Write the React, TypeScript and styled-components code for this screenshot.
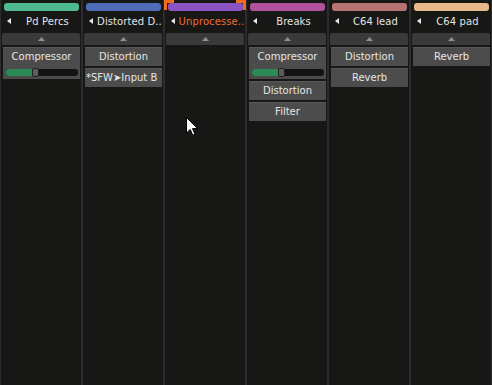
import React from 'react'
import { styled, createGlobalStyle } from 'styled-components'

type Slot = {
  name: string
  /** slider position 0..1, only for plugins with a visible parameter */
  value?: number
  align?: 'left' | 'center'
}

type Track = {
  name: string
  color: string
  selected?: boolean
  slots: Slot[]
}

const tracks: Track[] = [
  { name: 'Pd Percs', color: '#4fb992', slots: [{ name: 'Compressor', value: 0.42 }] },
  {
    name: 'Distorted D..',
    color: '#4f6cb8',
    slots: [{ name: 'Distortion' }, { name: '*SFW\u27A4Input B', align: 'left' }],
  },
  { name: 'Unprocesse..', color: '#8b52c2', selected: true, slots: [] },
  {
    name: 'Breaks',
    color: '#b2519c',
    slots: [{ name: 'Compressor', value: 0.42 }, { name: 'Distortion' }, { name: 'Filter' }],
  },
  { name: 'C64 lead', color: '#b87374', slots: [{ name: 'Distortion' }, { name: 'Reverb' }] },
  { name: 'C64 pad', color: '#e6b88a', slots: [{ name: 'Reverb' }] },
]

const GlobalStyle = createGlobalStyle`
  html, body {
    margin: 0;
    padding: 0;
    background: #171716;
  }
  body {
    font-family: "DejaVu Sans", "Liberation Sans", sans-serif;
    font-size: 10px;
  }
`

export default function App() {
  return (
    <Mixer>
      <GlobalStyle />
      {tracks.map((t) => (
        <Strip key={t.name} selected={!!t.selected}>
          <ColorBar color={t.color} />
          <NameRow>
            <Collapse viewBox="0 0 4 6">
              <path d="M4 0 L0 3 L4 6 Z" fill="#e8e8e8" />
            </Collapse>
            <Name selected={!!t.selected}>{t.name}</Name>
          </NameRow>
          <UpBar>
            <svg width="7" height="4" viewBox="0 0 7 4">
              <path d="M0 4 L3.5 0 L7 4 Z" fill="#8e8e8e" />
            </svg>
          </UpBar>
          <SlotList>
            {t.slots.map((s) => (
              <PluginSlot key={s.name} tall={s.value !== undefined}>
                <PluginName align={s.align ?? 'center'}>{s.name}</PluginName>
                {s.value !== undefined && (
                  <Slider>
                    <SliderFill style={{ width: `${s.value * 100}%` }} />
                    <SliderKnob style={{ left: `calc(${s.value * 100}% - 4px)` }} />
                  </Slider>
                )}
              </PluginSlot>
            ))}
          </SlotList>
        </Strip>
      ))}
      <Cursor width="12" height="19" viewBox="0 0 12 19">
        <path
          d="M0.5 0.5 L0.5 16 L4.2 12.4 L6.8 18.3 L9 17.3 L6.5 11.6 L11.5 11.6 Z"
          fill="#ffffff"
          stroke="#000000"
          strokeWidth="1"
        />
      </Cursor>
    </Mixer>
  )
}

const Mixer = styled.div`
  position: relative;
  display: flex;
  width: 492px;
  height: 385px;
  overflow: hidden;
  background: #171716;
`

const Strip = styled.div<{ selected: boolean }>`
  position: relative;
  width: 82px;
  flex: none;
  box-sizing: border-box;
  display: flex;
  flex-direction: column;
  border-left: 1px solid #2d2d31;
  border-right: 1px solid #2d2d31;
  background: #171716;

  &::before,
  &::after {
    content: '';
    display: ${({ selected }) => (selected ? 'block' : 'none')};
    position: absolute;
    top: 0;
    width: 7px;
    height: 7px;
    border-top: 3px solid #f26b1d;
  }
  &::before {
    left: -1px;
    border-left: 3px solid #f26b1d;
  }
  &::after {
    right: -1px;
    border-right: 3px solid #f26b1d;
  }
`

const ColorBar = styled.div<{ color: string }>`
  height: 8px;
  margin: 3px 2px 0 3px;
  border-radius: 3px;
  background: ${({ color }) => color};
`

const NameRow = styled.div`
  height: 20px;
  display: flex;
  align-items: center;
  gap: 3px;
  padding-left: 6px;
  color: #e4e4e4;
`

const Collapse = styled.svg`
  width: 4px;
  height: 6px;
  flex: none;
`

const Name = styled.div<{ selected: boolean }>`
  flex: 1;
  text-align: center;
  white-space: nowrap;
  color: ${({ selected }) => (selected ? '#f26b35' : '#e4e4e4')};
  letter-spacing: 0.1px;
`

const UpBar = styled.div`
  height: 12px;
  margin: 2px 1px 0 1px;
  border-radius: 2px 2px 0 0;
  background: #3a3a3b;
  display: flex;
  align-items: center;
  justify-content: center;
`

const SlotList = styled.div`
  display: flex;
  flex-direction: column;
  gap: 2px;
  margin: 2px 1px 0 2px;
`

const PluginSlot = styled.div<{ tall: boolean }>`
  height: ${({ tall }) => (tall ? 32 : 19)}px;
  box-sizing: border-box;
  background: #4c4c4c;
  border-top: 1px solid #585858;
  display: flex;
  flex-direction: column;
`

const PluginName = styled.div<{ align: 'left' | 'center' }>`
  height: 18px;
  line-height: 18px;
  color: #e6e6e6;
  text-align: ${({ align }) => align};
  padding-left: ${({ align }) => (align === 'left' ? 1 : 0)}px;
  white-space: nowrap;
  overflow: hidden;
`

const Slider = styled.div`
  position: relative;
  height: 7px;
  margin: 3px 2px 0 3px;
  border-radius: 3px;
  background: #121212;
`

const SliderFill = styled.div`
  height: 100%;
  border-radius: 3px 0 0 3px;
  background: #2c8a57;
`

const SliderKnob = styled.div`
  position: absolute;
  top: -1px;
  width: 7px;
  height: 9px;
  box-sizing: border-box;
  border-radius: 2px;
  border: 1px solid #202020;
  background: #5c5c5c;
`

const Cursor = styled.svg`
  position: absolute;
  left: 186px;
  top: 117px;
`
